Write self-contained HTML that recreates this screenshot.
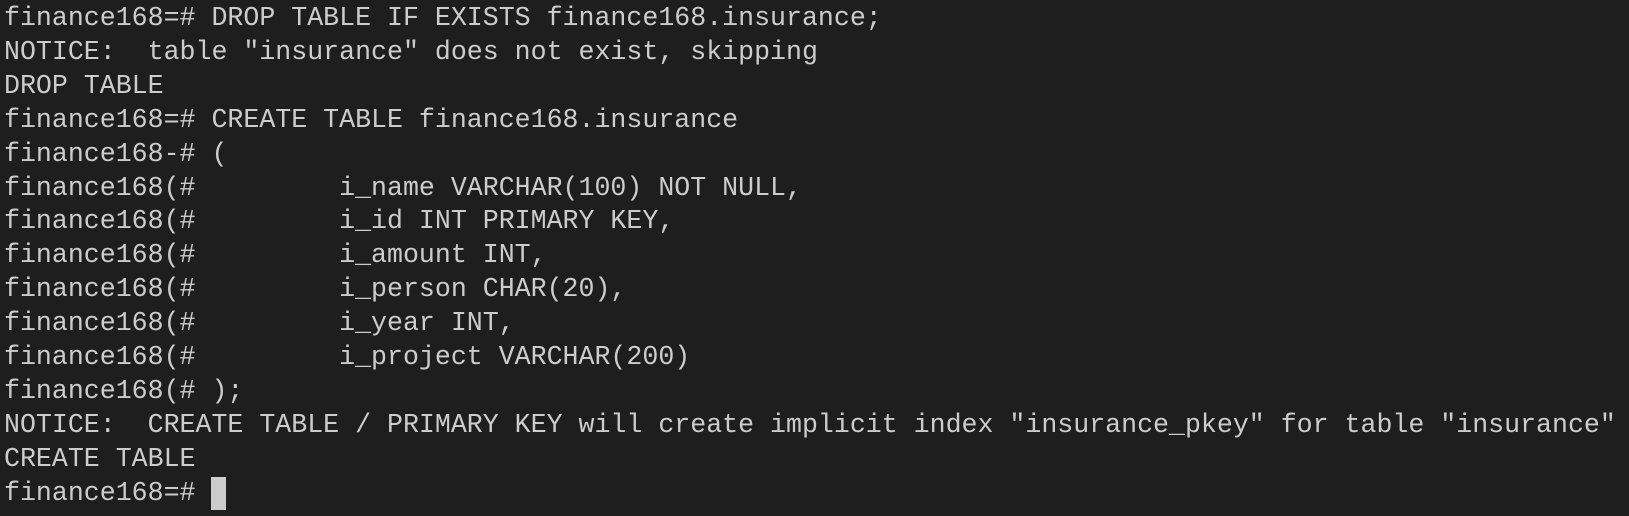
<!DOCTYPE html>
<html><head><meta charset="utf-8"><style>
html,body{margin:0;padding:0;background:#1e1e1e;width:1629px;height:516px;overflow:hidden}
pre{margin:0;padding:2px 0 0 4px;font-family:"Liberation Mono",monospace;font-size:26.6px;line-height:33.9px;color:#cccccc}
.cur{display:inline-block;width:15px;height:33px;background:#cccccc;vertical-align:top}
</style></head><body><pre>finance168=# DROP TABLE IF EXISTS finance168.insurance;
NOTICE:  table "insurance" does not exist, skipping
DROP TABLE
finance168=# CREATE TABLE finance168.insurance
finance168-# (
finance168(#         i_name VARCHAR(100) NOT NULL,
finance168(#         i_id INT PRIMARY KEY,
finance168(#         i_amount INT,
finance168(#         i_person CHAR(20),
finance168(#         i_year INT,
finance168(#         i_project VARCHAR(200)
finance168(# );
NOTICE:  CREATE TABLE / PRIMARY KEY will create implicit index "insurance_pkey" for table "insurance"
CREATE TABLE
finance168=# <span class="cur"></span></pre></body></html>
